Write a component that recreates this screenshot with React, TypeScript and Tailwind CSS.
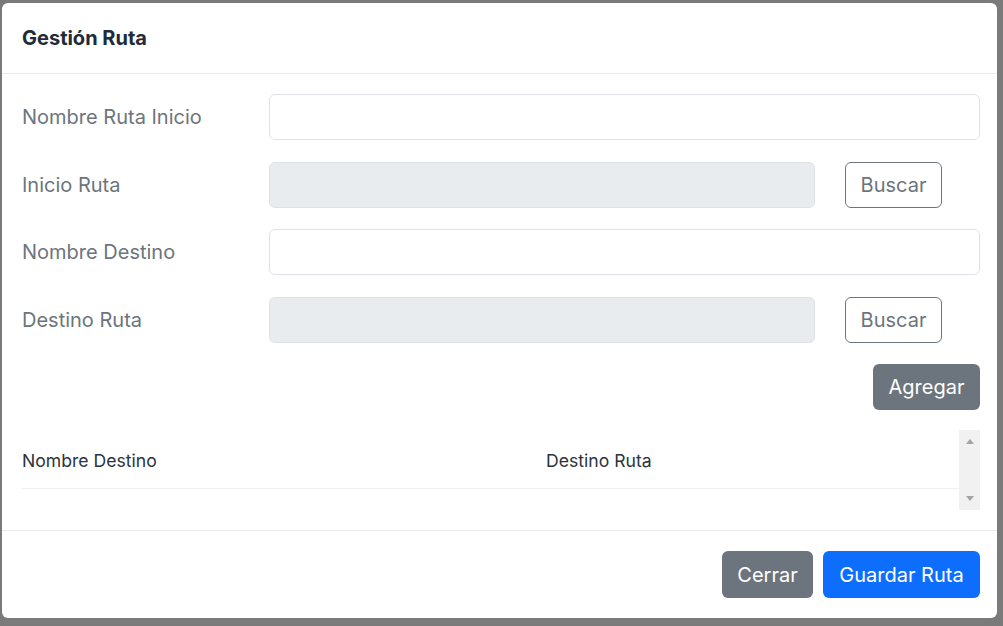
import React from 'react';

const font = { fontFamily: 'Inter, "Noto Sans", sans-serif' };

const FormRow = ({ label, disabled }: { label: string; disabled?: boolean }) => {
    return (
        <div className="flex h-[46px] items-center">
            <label className="w-[247px] shrink-0 text-[20px] leading-[30px] text-[#6c757d]">
                {label}
            </label>
            {disabled ? (
                <div className="flex flex-1 items-center">
                    <div className="h-[46px] w-[546px] rounded-[6px] border border-[#dee2e6] bg-[#e9ecef]" />
                    <button className="ml-[30px] h-[46px] w-[97px] rounded-[6px] border border-[#6c757d] bg-white text-[20px] text-[#6c757d]">
                        Buscar
                    </button>
                </div>
            ) : (
                <input
                    className="h-[46px] flex-1 rounded-[6px] border border-[#dee2e6] bg-white px-3 text-[20px] outline-none"
                    type="text"
                />
            )}
        </div>
    );
};

export default function App() {
    return (
        <div
            className="h-[626px] w-full bg-[#7a7a7a] pt-[3px] pl-[2px] pr-[6px] pb-[8px]"
            style={font}
        >
            <div className="flex h-full flex-col overflow-hidden rounded-[6px] bg-white">
                {/* header */}
                <div className="flex h-[71px] shrink-0 items-center border-b border-[#e9ecef] px-[20px] pb-[1px]">
                    <h5 className="text-[20px] font-bold leading-[30px] text-[#212b3a]">
                        Gestión Ruta
                    </h5>
                </div>

                {/* body */}
                <div className="flex flex-1 flex-col border-b border-[#e9ecef] pl-[20px] pr-[17px] pt-[20px]">
                    <div className="flex flex-col gap-[21.7px]">
                        <FormRow label="Nombre Ruta Inicio" />
                        <FormRow label="Inicio Ruta" disabled />
                        <FormRow label="Nombre Destino" />
                        <FormRow label="Destino Ruta" disabled />
                    </div>
                    <div className="mt-[21px] flex justify-end">
                        <button className="h-[46px] w-[107px] rounded-[6px] bg-[#6c757d] text-[20px] text-white">
                            Agregar
                        </button>
                    </div>
                    <div className="mt-[20px] flex h-[80px]">
                        <div className="flex-1">
                            <div className="flex h-[59px] border-b border-[#eef0f2] pt-[18px] text-[17.6px] leading-[26px] text-[#2b3340]">
                                <div className="w-[524px]">Nombre Destino</div>
                                <div>Destino Ruta</div>
                            </div>
                        </div>
                        <div className="flex w-[21px] flex-col items-center justify-between bg-[#f1f1f1] py-[9px]">
                            <div className="h-0 w-0 border-x-[4px] border-b-[5px] border-x-transparent border-b-[#a3a3a3]" />
                            <div className="h-0 w-0 border-x-[4px] border-t-[5px] border-x-transparent border-t-[#a3a3a3]" />
                        </div>
                    </div>
                    <div className="h-[20px]" />
                </div>

                {/* footer */}
                <div className="flex h-[87px] shrink-0 items-center justify-end gap-[10px] pr-[17px]">
                    <button className="h-[47px] w-[91px] rounded-[6px] bg-[#6c757d] text-[20px] text-white">
                        Cerrar
                    </button>
                    <button className="h-[47px] w-[157px] rounded-[6px] bg-[#0d6efd] text-[20px] text-white">
                        Guardar Ruta
                    </button>
                </div>
            </div>
        </div>
    );
}
